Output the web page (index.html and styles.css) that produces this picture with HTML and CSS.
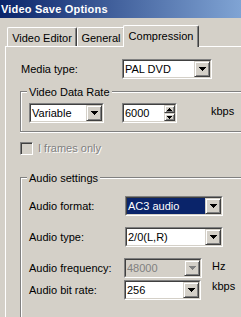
FILE: index.html
```html
<!DOCTYPE html>
<html>
<head>
<meta charset="utf-8">
<link rel="stylesheet" href="styles.css">
</head>
<body>
<div class="titlebar">Video Save Options</div>
<div class="tabs">
  <div class="tab tab-editor">Video Editor</div>
  <div class="tab tab-general">General</div>
  <div class="tab tab-active">Compression</div>
</div>
<div class="panel">
  <div class="row row-media">
    <span class="label lbl-media">Media type:</span>
    <div class="combo w-media"><div class="combo-in"><span class="combo-text">PAL DVD</span><span class="combo-btn"><svg width="7" height="4" viewBox="0 0 7 4" shape-rendering="crispEdges"><path d="M0 0h7v1H0zM1 1h5v1H1zM2 2h3v1H2zM3 3h1v1H3z"/></svg></span></div></div>
  </div>

  <div class="group group-video">
    <div class="legend">Video Data Rate</div>
    <div class="row row-indent row-first-video">
      <div class="combo w-variable"><div class="combo-in"><span class="combo-text">Variable</span><span class="combo-btn"><svg width="7" height="4" viewBox="0 0 7 4" shape-rendering="crispEdges"><path d="M0 0h7v1H0zM1 1h5v1H1zM2 2h3v1H2zM3 3h1v1H3z"/></svg></span></div></div>
      <div class="combo spin"><div class="combo-in"><span class="combo-text">6000</span><span class="spin-btns"><span class="spin-btn"><svg width="5" height="3" viewBox="0 0 5 3" shape-rendering="crispEdges"><path d="M2 0h1v1H2zM1 1h3v1H1zM0 2h5v1H0z"/></svg></span><span class="spin-btn"><svg width="5" height="3" viewBox="0 0 5 3" shape-rendering="crispEdges"><path d="M0 0h5v1H0zM1 1h3v1H1zM2 2h1v1H2z"/></svg></span></span></div></div>
      <span class="unit unit-video">kbps</span>
    </div>
  </div>

  <div class="check-row">
    <span class="checkbox"></span>
    <span class="check-label">I frames only</span>
  </div>

  <div class="group group-audio">
    <div class="legend">Audio settings</div>
    <div class="row row-indent row-a1">
      <span class="label lbl-a1">Audio format:</span>
      <div class="combo w-a1"><div class="combo-in"><span class="combo-text selected">AC3 audio</span><span class="combo-btn"><svg width="7" height="4" viewBox="0 0 7 4" shape-rendering="crispEdges"><path d="M0 0h7v1H0zM1 1h5v1H1zM2 2h3v1H2zM3 3h1v1H3z"/></svg></span></div></div>
    </div>
    <div class="row row-indent row-a2">
      <span class="label lbl-a1">Audio type:</span>
      <div class="combo w-a1"><div class="combo-in"><span class="combo-text">2/0(L,R)</span><span class="combo-btn"><svg width="7" height="4" viewBox="0 0 7 4" shape-rendering="crispEdges"><path d="M0 0h7v1H0zM1 1h5v1H1zM2 2h3v1H2zM3 3h1v1H3z"/></svg></span></div></div>
    </div>
    <div class="row row-indent row-a3">
      <span class="label lbl-a3">Audio frequency:</span>
      <div class="combo w-freq disabled"><div class="combo-in"><span class="combo-text">48000</span><span class="combo-btn"><svg width="7" height="4" viewBox="0 0 7 4" shape-rendering="crispEdges"><path d="M0 0h7v1H0zM1 1h5v1H1zM2 2h3v1H2zM3 3h1v1H3z"/></svg></span></div></div>
      <span class="unit unit-hz">Hz</span>
    </div>
    <div class="row row-indent row-a4">
      <span class="label lbl-a3">Audio bit rate:</span>
      <div class="combo w-bit"><div class="combo-in"><span class="combo-text">256</span><span class="combo-btn"><svg width="7" height="4" viewBox="0 0 7 4" shape-rendering="crispEdges"><path d="M0 0h7v1H0zM1 1h5v1H1zM2 2h3v1H2zM3 3h1v1H3z"/></svg></span></div></div>
      <span class="unit unit-kbps">kbps</span>
    </div>
  </div>
</div>
</body>
</html>
```

FILE: styles.css
```css
html, body {
  margin: 0;
  padding: 0;
}
body {
  width: 241px;
  height: 317px;
  overflow: hidden;
  display: flex;
  flex-direction: column;
  background: #d4d0c8;
  font-family: "Liberation Sans", Arial, sans-serif;
  font-size: 11px;
  line-height: 13px;
  color: #000;
}

.titlebar {
  flex: none;
  height: 18px;
  line-height: 18px;
  padding-left: 1px;
  color: #fff;
  font-weight: bold;
  white-space: nowrap;
  letter-spacing: 0.2px;
  background: linear-gradient(to right, #0a246a 0%, #80a4d4 100%);
}

.tabs {
  flex: none;
  height: 28px;
  display: flex;
  align-items: flex-end;
  padding-left: 7px;
  position: relative;
  z-index: 1;
}
.tab {
  box-sizing: border-box;
  height: 19px;
  padding-top: 4px;
  text-align: center;
  white-space: nowrap;
  background: #d4d0c8;
  border-top: 1px solid #fff;
  border-left: 1px solid #fff;
  border-right: 1px solid #404040;
  box-shadow: inset -1px 0 0 #808080;
  border-radius: 2px 2px 0 0;
}
.tab-editor { width: 70px; }
.tab-general { width: 48px; }
.tab-active {
  width: 76px;
  height: 22px;
  margin-left: -2px;
  margin-bottom: -1px;
}

.panel {
  flex: 1;
  min-height: 0;
  display: flex;
  flex-direction: column;
  margin-left: 5px;
  border-left: 1px solid #fff;
  border-top: 1px solid #fff;
  padding-top: 12px;
}

.row {
  flex: none;
  display: flex;
  align-items: center;
  height: 20px;
}
.row-media { padding-left: 15px; }
.row-indent { padding-left: 8px; }
.label { flex: none; white-space: nowrap; }
.lbl-media { width: 101px; }
.lbl-a1 { width: 96px; }
.lbl-a3 { width: 95px; }

.group {
  flex: none;
  margin: 12px 0 0 14px;
  border: 1px solid #808080;
  border-right: none;
  box-shadow: inset 1px 1px 0 #fff;
}
.group-video {
  padding-bottom: 8px;
  box-shadow: inset 1px 1px 0 #fff, 0 1px 0 #fff;
}
.group-audio {
  flex: 1;
  margin-top: 22px;
  border-bottom: none;
  padding-bottom: 0;
}
.legend {
  display: table;
  margin: -6px 0 0 6px;
  padding: 0 2px;
  background: #d4d0c8;
  white-space: nowrap;
}
.row-first-video { margin-top: 4px; }
.row-a1 { margin-top: 11px; }
.row-a2 { margin-top: 11px; }
.row-a3 { margin-top: 11px; }
.row-a4 { margin-top: 2px; }

/* combo box */
.combo {
  flex: none;
  box-sizing: border-box;
  height: 20px;
  display: flex;
  border: 1px solid;
  border-color: #808080 #fff #fff #808080;
}
.combo-in {
  flex: 1;
  display: flex;
  border: 1px solid;
  border-color: #404040 #d4d0c8 #d4d0c8 #404040;
  background: #fff;
  min-width: 0;
}
.combo-text {
  flex: 1;
  padding-left: 1px;
  line-height: 16px;
  white-space: nowrap;
  overflow: hidden;
}
.combo-text.selected {
  background: #0a246a;
  color: #fff;
}
.combo-btn {
  flex: none;
  box-sizing: border-box;
  width: 16px;
  height: 16px;
  display: flex;
  align-items: center;
  justify-content: center;
  background: #d4d0c8;
  border: 1px solid;
  border-color: #d4d0c8 #404040 #404040 #d4d0c8;
  box-shadow: inset 1px 1px 0 #fff, inset -1px -1px 0 #808080;
}
.combo-btn svg { display: block; fill: #000; }
.combo.disabled .combo-in { background: #d4d0c8; }
.combo.disabled .combo-text { color: #808080; }
.combo.disabled .combo-btn svg { fill: #808080; }

.w-media { width: 90px; }
.w-variable { width: 75px; }
.w-a1 { width: 98px; }
.w-freq { width: 78px; }
.w-bit { width: 77px; }

.spin { width: 55px; margin-left: 18px; }
.spin-btns {
  flex: none;
  width: 11px;
  display: flex;
  flex-direction: column;
}
.spin-btn {
  flex: 1;
  box-sizing: border-box;
  display: flex;
  align-items: center;
  justify-content: center;
  background: #d4d0c8;
  border: 1px solid;
  border-color: #d4d0c8 #404040 #404040 #d4d0c8;
  box-shadow: inset 1px 1px 0 #fff, inset -1px -1px 0 #808080;
}
.spin-btn svg { display: block; fill: #000; }

.unit { align-self: flex-start; white-space: nowrap; }
.unit-video { margin-left: 34px; margin-top: 2px; }
.unit-hz { margin-left: 10px; margin-top: 2px; }
.unit-kbps { margin-left: 11px; margin-top: 0; }

.check-row {
  flex: none;
  display: flex;
  align-items: center;
  margin: 10px 0 0 14px;
  height: 13px;
}
.checkbox {
  flex: none;
  box-sizing: border-box;
  width: 13px;
  height: 13px;
  border: 1px solid;
  border-color: #808080 #fff #fff #808080;
  box-shadow: inset 1px 1px 0 #404040, inset -1px -1px 0 #d4d0c8;
  background: #d4d0c8;
}
.check-label {
  margin-left: 5px;
  color: #808080;
  text-shadow: 1px 1px 0 #fff;
  white-space: nowrap;
}
```
